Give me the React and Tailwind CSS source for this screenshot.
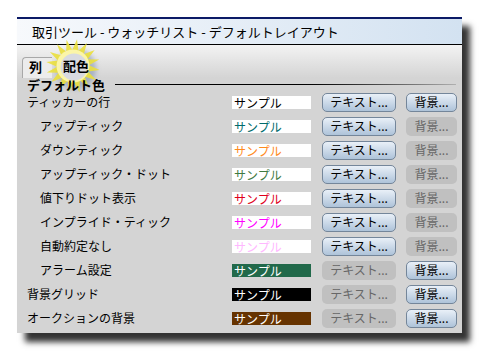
import React from "react";

const rows = [
  { label: "ティッカーの行", indent: false, box: "bg-white text-black", text: true, back: true },
  { label: "アップティック", indent: true, box: "bg-white text-[#006b6b]", text: true, back: false },
  { label: "ダウンティック", indent: true, box: "bg-white text-[#ff8a1c]", text: true, back: false },
  { label: "アップティック・ドット", indent: true, box: "bg-white text-[#3f7a3f]", text: true, back: false },
  { label: "値下りドット表示", indent: true, box: "bg-white text-[#e0001a]", text: true, back: false },
  { label: "インプライド・ティック", indent: true, box: "bg-white text-[#ff00ff]", text: true, back: false },
  { label: "自動約定なし", indent: true, box: "bg-white text-[#ffb8ff]", text: true, back: false },
  { label: "アラーム設定", indent: true, box: "bg-[#21694a] text-white", text: false, back: true },
  { label: "背景グリッド", indent: false, box: "bg-black text-white", text: false, back: true },
  { label: "オークションの背景", indent: false, box: "bg-[#663300] text-white", text: false, back: true },
];

// spiky highlight drawn over the selected tab
function Burst() {
  const pts = [];
  const n = 16;
  for (let i = 0; i < n * 2; i++) {
    const r = i % 2 === 0 ? 27 : 16;
    const a = (Math.PI * i) / n + 0.15;
    pts.push(`${36 + r * Math.cos(a)},${36 + r * Math.sin(a)}`);
  }
  return (
    <svg width="72" height="72" viewBox="0 0 72 72" className="absolute left-[20px] top-[11px] pointer-events-none">
      <defs>
        <filter id="soft" x="-20%" y="-20%" width="140%" height="140%">
          <feGaussianBlur stdDeviation="0.6" />
        </filter>
        <filter id="softer" x="-20%" y="-20%" width="140%" height="140%">
          <feGaussianBlur stdDeviation="2.5" />
        </filter>
      </defs>
      <circle cx="39" cy="39" r="20" fill="#7d8fb0" opacity="0.55" filter="url(#softer)" />
      <polygon points={pts.join(" ")} fill="#ebe03c" opacity="0.9" filter="url(#soft)" />
      <circle cx="36" cy="36" r="16.5" fill="#fbf5a8" filter="url(#soft)" />
      <circle cx="37" cy="37" r="13.5" fill="#d8dae0" filter="url(#soft)" />
    </svg>
  );
}

export default function App() {
  return (
    <div className="min-h-screen bg-white pl-[17px] pt-[17px] font-[Noto_Sans_CJK_JP,sans-serif] text-black">
      <div className="relative w-[445px] h-[316px] bg-[#d4d4d4] border-t-2 border-[#0b1a66] shadow-[8px_9px_6px_rgba(0,0,0,0.8)] flex flex-col">
        {/* TITLE */}
        <div className="h-[26px] shrink-0 flex items-center pl-[15px] border-b border-black bg-gradient-to-r from-[#f7f9fc] to-[#d3e2f1] text-[13px] leading-none">
          取引ツール - ウォッチリスト - デフォルトレイアウト
        </div>

        {/* TABS */}
        <div className="relative h-[33px] shrink-0 flex items-end pl-[5px] bg-gradient-to-b from-[#f3f3f3] to-[#d4d4d4]">
          <div className="h-[21px] w-[30px] flex items-start pt-[1px] pl-[6px] border-l border-t border-[#a8a8a8] rounded-tl-[4px] bg-[#ececec] text-[13px] font-bold leading-[16px]">
            列
          </div>
        </div>
        <Burst />
        <div className="absolute left-[46px] top-[39px] text-[13px] font-bold leading-[16px]">配色</div>

        {/* HEADING */}
        <div className="relative h-[12px] shrink-0 flex items-center pl-[10px]">
          <span className="text-[13px] font-bold leading-none">デフォルト色</span>
          <div className="flex-1 h-px ml-[10px] mr-[6px] bg-gradient-to-r from-black via-black to-[#b0b0b0]" />
        </div>

        {/* ROWS */}
        <div className="flex flex-col">
          {rows.map((r) => (
            <div key={r.label} className="h-[24px] flex items-center">
              <div className={`w-[215px] shrink-0 text-[12px] leading-none ${r.indent ? "pl-[23px]" : "pl-[10px]"}`}>
                {r.label}
              </div>
              <div className={`w-[79px] h-[13px] shrink-0 pl-[2px] text-[12px] leading-[13px] ${r.box}`}>
                サンプル
              </div>
              <Btn enabled={r.text} className="ml-[11px] w-[74px]">テキスト...</Btn>
              <Btn enabled={r.back} className="ml-[10px] w-[51px]">背景...</Btn>
            </div>
          ))}
        </div>
      </div>
    </div>
  );
}

function Btn({ enabled, className, children }) {
  return (
    <div
      className={`${className} h-[19px] shrink-0 flex items-center justify-center rounded-[5px] text-[12px] leading-none ${
        enabled
          ? "border border-[#74869a] bg-gradient-to-b from-[#e9f0f8] to-[#aec3d9] text-black"
          : "bg-[#c0c0c0] text-[#676767]"
      }`}
    >
      {children}
    </div>
  );
}
